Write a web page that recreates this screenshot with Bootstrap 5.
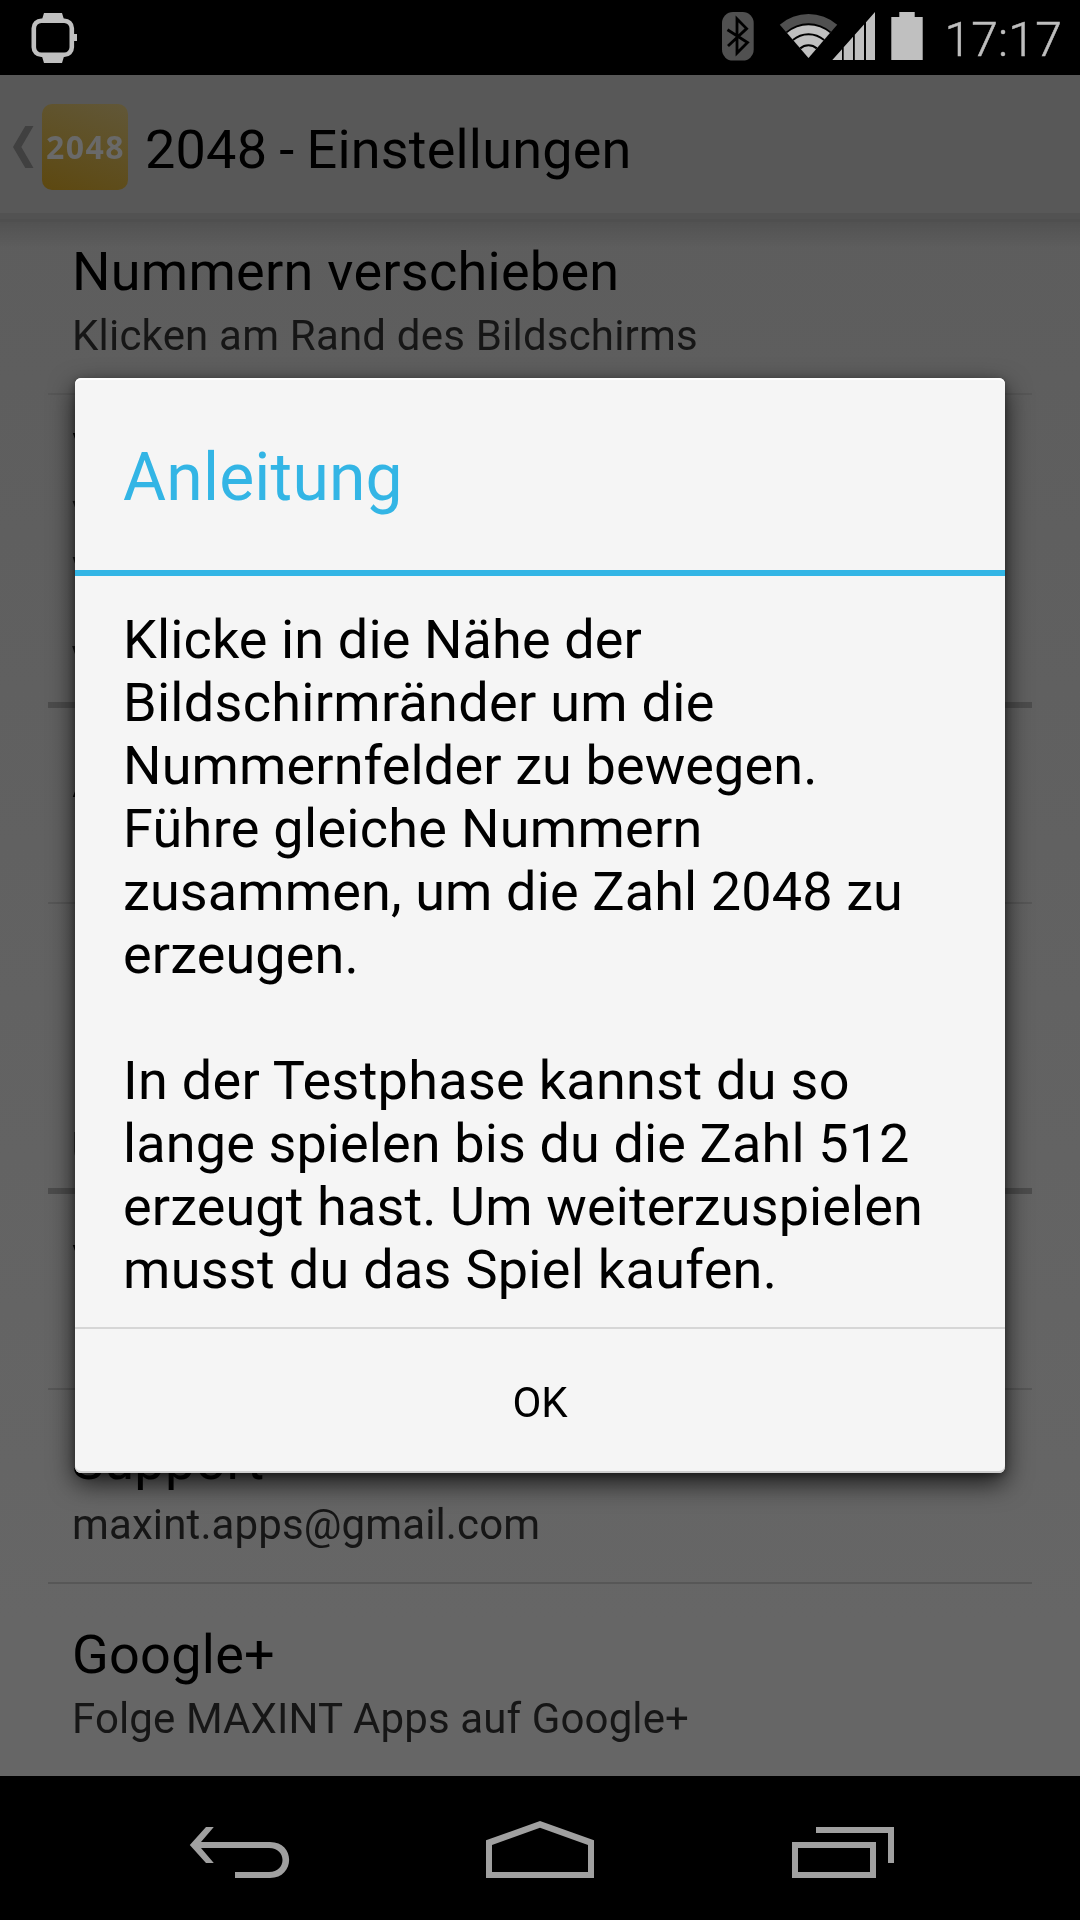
<!DOCTYPE html>
<html lang="de">
<head>
<meta charset="utf-8">
<meta name="viewport" content="width=device-width, initial-scale=1">
<title>2048 - Einstellungen</title>
<link href="https://cdn.jsdelivr.net/npm/bootstrap@5.3.0/dist/css/bootstrap.min.css" rel="stylesheet">
<style>
  body { font-family: Roboto, "Noto Sans", sans-serif; background: #000; color: #000; overflow: hidden; }
  .phone { width: 1080px; height: 1920px; will-change: transform; }
  svg { display: block; flex: none; }
  .status-bar { height: 75px; padding: 12px 18px 0 31px; }
  .clock { font-size: 48px; line-height: 56px; color: #bebebe; font-weight: 300; margin: 0 0 0 21px; letter-spacing: .2px; -webkit-text-stroke: .5px #bebebe; }
  .action-bar { height: 138px; background: #585858; padding-left: 13px; }
  .app-tile { width: 86px; height: 86px; margin: 29px 0 0 8px; border-radius: 10px; color: #696969;
    background: linear-gradient(20deg, #5d4810 0%, #5f5024 50%, #615738 100%);
    font: 700 32px/86px "Open Sans", sans-serif; letter-spacing: 1.5px; text-indent: 1px; }
  .app-title { font-size: 54px; line-height: 63px; margin: 43px 0 0 17px; letter-spacing: .2px; word-spacing: -1.5px; }
  .bar-edge { height: 9px; background: linear-gradient(#525252 0 6px, #4f4f4f 6px); }
  .settings { background: linear-gradient(rgba(0,0,0,.12), transparent 26px), linear-gradient(#5d5d5d, #666 90%); padding: 0 48px; }
  .pref { min-height: 192px; padding: 26px 24px 20px; flex: none; }
  .pref-first { min-height: 171px; padding-top: 18px; }
  .pref-title { font-size: 54px; line-height: 63px; letter-spacing: .27px; white-space: nowrap; }
  .pref-sub { font-size: 42px; line-height: 49px; margin-top: 8px; color: #161616; letter-spacing: .12px; white-space: nowrap; }
  .pref-first .pref-sub { letter-spacing: .2px; }
  .rule-thin { height: 2px; background: #575757; flex: none; }
  .pref-group { height: 98px; padding: 27px 24px 0; border-bottom: 6px solid #4c4c4c; font-size: 42px; line-height: 49px; font-weight: 700; color: #161616; flex: none; }
  .pref-group + .pref + .rule-thin { margin-top: 2px; }
  .overlay { top: 75px; height: 1701px; }
  .alert-dialog { width: 930px; background: #f5f5f5; border: 0; border-radius: 6px;
    box-shadow: 0 10px 26px rgba(0,0,0,.75), 0 2px 6px rgba(0,0,0,.3), inset 0 2px 0 #fff, inset 0 -2px 0 #cfcfcf; }
  .dialog-head { height: 198px; border-bottom: 6px solid #33b5e5; padding: 61px 48px 0; }
  .dialog-head h1 { font-size: 66px; line-height: 77px; font-weight: 400; letter-spacing: .2px; color: #33b5e5; margin: 0; }
  .dialog-text { padding: 32px 48px 26px; font-size: 54px; line-height: 63px; letter-spacing: .12px; }
  .dialog-text p { margin: 0 0 63px; white-space: nowrap; }
  .dialog-text p:last-child { margin: 0; }
  .dialog-text .open { letter-spacing: .29px; }
  .dialog-foot { height: 146px; border-top: 2px solid #d6d6d6; }
  .dialog-foot button { font-size: 42px; line-height: 49px; border: 0; color: #000; padding: 0 40px; margin-top: 3px; }
  .nav-keys { height: 144px; }
</style>
<script src="https://cdn.jsdelivr.net/npm/bootstrap@5.3.0/dist/js/bootstrap.bundle.min.js"></script>
</head>
<body>
<div class="phone d-flex flex-column position-relative overflow-hidden">

  <header class="status-bar d-flex align-items-start">
    <svg width="48" height="52" viewBox="31 12 48 52" fill="#c0c0c0">
      <path d="M44 13H62L64 19.500H42ZM44 63H62L64 56.500H42Z"/>
      <rect x="33.800" y="20.800" width="38" height="34" rx="7.500" fill="#000" stroke="#c0c0c0" stroke-width="4.600"/>
      <path d="M74 34H77V41H74Z"/>
    </svg>
    <svg class="ms-auto" width="32" height="49" viewBox="723 12 32 49">
      <rect x="723" y="12" width="31.700" height="48.600" rx="11" fill="#505050"/>
      <path d="M728.500 29.800L748.500 42.500L738 53V19L747.600 28.600L729 46" fill="none" stroke="#000" stroke-width="2.800"/>
    </svg>
    <svg class="ms-4" width="98" height="49" viewBox="779 12 98 49" fill="#c0c0c0">
      <path d="M809.500 58L780.800 24.700A44 44 0 0 1 838.200 24.700Z" fill="#505050"/>
      <path d="M809.500 58L786.900 31.700A34.700 34.700 0 0 1 832.100 31.700Z" fill="#000"/>
      <path d="M809.500 58L788.100 33.100A32.800 32.800 0 0 1 830.900 33.100Z"/>
      <path d="M793.300 39.200A24.800 24.800 0 0 1 825.700 39.200L824.500 40.800A23 23 0 0 0 794.500 40.800ZM800.500 47.500A13.800 13.800 0 0 1 818.500 47.500L817.100 49.200A11.600 11.600 0 0 0 801.900 49.200Z" fill="#000"/>
      <path d="M833.300 60L843 49.200V60ZM844.700 60V47.200L854 36.800V60ZM855.800 60V34.700L865 24.400V60ZM867 60V22.200L876 12V60Z"/>
    </svg>
    <svg style="margin-left:15px" width="32" height="49" viewBox="892 12 32 49"><path d="M892.300 17H900.300V12H915.700V17H923.700V60H892.300Z" fill="#c0c0c0"/></svg>
    <div class="clock">17:17</div>
  </header>

  <nav class="action-bar d-flex align-items-start">
    <svg style="margin-top:51px" width="21" height="42" viewBox="0 0 21 42"><path d="M20.500 0H12.300L0 21L12.300 42H20.500L8.300 21Z" fill="#404040"/></svg>
    <div class="app-tile text-center">2048</div>
    <div class="app-title">2048 - Einstellungen</div>
  </nav>
  <div class="bar-edge"></div>

  <main class="settings flex-fill d-flex flex-column overflow-hidden">
    <div class="pref pref-first">
      <div class="pref-title">Nummern verschieben</div>
      <div class="pref-sub">Klicken am Rand des Bildschirms</div>
    </div>
    <div class="rule-thin"></div>
    <div class="pref">
      <div class="pref-title">Vibration</div>
      <div class="pref-sub">Vibrieren beim<br>verschieben</div>
    </div>
    <div class="pref-group">VOLLVERSION</div>
    <div class="pref d-flex flex-column justify-content-center">
      <div class="pref-title">App kaufen</div>
      <div class="pref-sub">Kaufen</div>
    </div>
    <div class="rule-thin"></div>
    <div class="pref d-flex flex-column justify-content-center">
      <div class="pref-title">Hilfe</div>
      <div class="pref-sub">Hilfe</div>
    </div>
    <div class="pref-group">ÜBER</div>
    <div class="pref d-flex flex-column justify-content-center">
      <div class="pref-title">Version</div>
      <div class="pref-sub">1.0</div>
    </div>
    <div class="rule-thin"></div>
    <div class="pref d-flex flex-column justify-content-center">
      <div class="pref-title">Support</div>
      <div class="pref-sub">maxint.apps@gmail.com</div>
    </div>
    <div class="rule-thin"></div>
    <div class="pref d-flex flex-column justify-content-center">
      <div class="pref-title">Google+</div>
      <div class="pref-sub">Folge MAXINT Apps auf Google+</div>
    </div>
  </main>

  <footer class="nav-keys d-flex justify-content-center">
    <svg width="1080" height="144" viewBox="0 1776 1080 144" fill="#a0a0a0">
      <path d="M189.800 1845L206 1827H213.800L201 1842H270C296 1842 295 1878 270 1878H235V1872H269C287 1872 287 1848 269 1848H201L213.800 1863H206Z"/>
      <path fill-rule="evenodd" d="M486 1840.300L540 1821L594 1840.300V1878H486ZM492 1845V1872H588V1845L540 1827.700Z"/>
      <path fill-rule="evenodd" d="M792 1842H876V1878H792ZM798 1848V1872H870V1848Z"/>
      <path d="M816 1827H894V1863H888V1833H816Z"/>
    </svg>
  </footer>

  <div class="overlay position-absolute start-0 w-100 d-flex align-items-center justify-content-center">
    <section class="alert-dialog modal-content" role="dialog">
      <div class="dialog-head"><h1>Anleitung</h1></div>
      <div class="dialog-text">
        <p>Klicke in die Nähe der<br><span class="open">Bildschirmränder um die</span><br>Nummernfelder zu bewegen.<br><span class="open">Führe gleiche Nummern</span><br>zusammen, um die Zahl 2048 zu<br>erzeugen.</p>
        <p><span class="open">In der Testphase kannst du so</span><br>lange spielen bis du die Zahl 512<br>erzeugt hast. Um weiterzuspielen<br><span class="open">musst du das Spiel kaufen.</span></p>
      </div>
      <div class="dialog-foot d-flex align-items-center justify-content-center"><button type="button" class="btn">OK</button></div>
    </section>
  </div>
</div>
</body>
</html>
